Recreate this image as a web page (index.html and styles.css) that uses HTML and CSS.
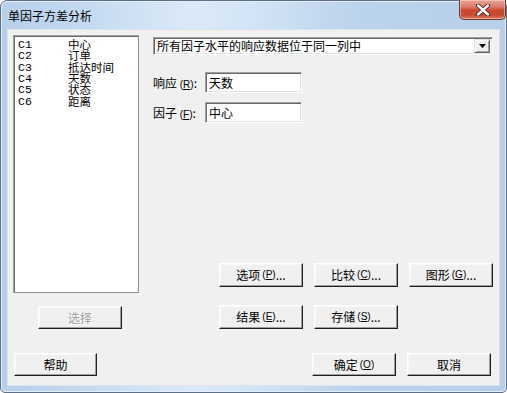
FILE: index.html
```html
<!DOCTYPE html>
<html lang="zh-CN">
<head>
<meta charset="utf-8">
<title>单因子方差分析</title>
<link rel="stylesheet" href="styles.css">
</head>
<body>
<div class="window">
  <div class="titlebar">
    <span class="title">单因子方差分析</span>
    <div class="close">
      <svg width="16" height="12" viewBox="0 0 16 12">
        <path d="M3 1.5 L13 10.5 M13 1.5 L3 10.5" fill="none" stroke="#3b2420" stroke-width="4.2" stroke-linecap="round"/>
        <path d="M3 1.5 L13 10.5 M13 1.5 L3 10.5" fill="none" stroke="#ffffff" stroke-width="2.4" stroke-linecap="round"/>
      </svg>
    </div>
  </div>
  <div class="client">
    <div class="main">
      <div class="left">
        <div class="listbox">
          <div class="item"><span class="code">C1</span><span class="name">中心</span></div>
          <div class="item"><span class="code">C2</span><span class="name">订单</span></div>
          <div class="item"><span class="code">C3</span><span class="name">抵达时间</span></div>
          <div class="item"><span class="code">C4</span><span class="name">天数</span></div>
          <div class="item"><span class="code">C5</span><span class="name">状态</span></div>
          <div class="item"><span class="code">C6</span><span class="name">距离</span></div>
        </div>
        <div class="btn disabled select-btn">选择</div>
      </div>
      <div class="right">
        <div class="combo">
          <span class="combo-text">所有因子水平的响应数据位于同一列中</span>
          <span class="combo-arrow">
            <svg width="7" height="4" viewBox="0 0 7 4"><path d="M0 0 H7 L3.5 4 Z" fill="#000"/></svg>
          </span>
        </div>
        <div class="field first">
          <span class="label">响应 <span class="mn">(<u>R</u>)</span>:</span>
          <span class="textbox">天数</span>
        </div>
        <div class="field">
          <span class="label">因子 <span class="mn">(<u>F</u>)</span>:</span>
          <span class="textbox">中心</span>
        </div>
        <div class="btn-grid">
          <div class="btn">选项<span class="mn">(<u>P</u>)</span>...</div>
          <div class="btn">比较<span class="mn">(<u>C</u>)</span>...</div>
          <div class="btn">图形<span class="mn">(<u>G</u>)</span>...</div>
          <div class="btn">结果<span class="mn">(<u>E</u>)</span>...</div>
          <div class="btn">存储<span class="mn">(<u>S</u>)</span>...</div>
        </div>
      </div>
    </div>
    <div class="bottom">
      <div class="btn help">帮助</div>
      <div class="btn ok">确定<span class="mn">(<u>O</u>)</span></div>
      <div class="btn">取消</div>
    </div>
  </div>
</div>
</body>
</html>
```
FILE: styles.css
```css
* { box-sizing: border-box; }
html, body { margin: 0; padding: 0; background: #ffffff; }
body {
  width: 507px;
  height: 393px;
  overflow: hidden;
  font-family: "Noto Sans CJK SC", "Liberation Sans", sans-serif;
  font-size: 12px;
  color: #000;
}
.window {
  width: 507px;
  height: 393px;
  border: 1px solid #5d6f86;
  border-radius: 7px 7px 5px 5px;
  background:
    linear-gradient(90deg, #b6cfe9 0%, #c8dcf2 20%, #dbeaf8 38%, #d2e4f6 50%, #bcd3ec 70%, #b8cfe9 100%);
  box-shadow: inset 0 0 0 1px #e4eefa;
  padding: 0 6px 6px 6px;
  display: flex;
  flex-direction: column;
}
.titlebar {
  height: 28px;
  display: flex;
  align-items: flex-start;
  position: relative;
}
.title {
  margin: 7px 0 0 1px;
  line-height: 16px;
  color: #000;
}
.close {
  position: absolute;
  right: -6px;
  top: -1px;
  width: 47px;
  height: 20px;
  border: 1px solid #6b3a32;
  border-top: none;
  border-radius: 0 0 5px 5px;
  background: linear-gradient(180deg, #e8a597 0%, #db7d6a 35%, #c9472f 55%, #c84a32 80%, #dc7b63 100%);
  box-shadow: inset 0 0 0 1px rgba(255,220,210,0.5);
  display: flex;
  align-items: center;
  justify-content: center;
}
.client {
  flex: 1;
  background: #f0f0f0;
  border: 1px solid #dbe3ec;
  display: flex;
  flex-direction: column;
}
.main {
  display: flex;
  padding: 5px 0 0 5px;
}
.left {
  width: 126px;
  display: flex;
  flex-direction: column;
}
.listbox {
  height: 258px;
  background: #fff;
  border: 1px solid;
  border-color: #a0a0a0 #8e8e8e #8e8e8e #a0a0a0;
  box-shadow: inset 1px 1px 0 #696969;
  padding: 3px 0 0 4px;
}
.item {
  display: flex;
  align-items: center;
  height: 11.3px;
  line-height: 11px;
  white-space: nowrap;
}
.code {
  width: 50px;
  font-family: "Liberation Mono", monospace;
  font-size: 11.5px;
}
.name { font-size: 11.5px; }
.btn {
  height: 23px;
  width: 84px;
  background: #f0f0f0;
  border: 1px solid;
  border-color: #ffffff #1e1e1e #1e1e1e #ffffff;
  box-shadow: inset -1px -1px 0 #a0a0a0, inset 1px 1px 0 #f8f8f8;
  display: flex;
  align-items: center;
  justify-content: center;
  white-space: nowrap;
  line-height: 14px;
}
.btn.disabled {
  color: #a0a0a0;
  text-shadow: 1px 1px 0 #ffffff;
}
.select-btn { margin: 13px 0 0 25px; }
.mn {
  font-family: "Liberation Sans", sans-serif;
  font-size: 10px;
  margin-left: 2px;
}
.mn u { text-underline-offset: 1px; }
.right {
  margin-left: 14px;
  width: 340px;
  padding-top: 2px;
  display: flex;
  flex-direction: column;
}
.combo {
  height: 18px;
  background: #fff;
  border: 1px solid;
  border-color: #a0a0a0 #ffffff #ffffff #a0a0a0;
  box-shadow: inset 1px 1px 0 #696969, inset -1px -1px 0 #e3e3e3;
  display: flex;
  align-items: center;
  padding: 0 2px 0 3px;
}
.combo-text { flex: 1; line-height: 14px; }
.combo-arrow {
  width: 16px;
  height: 14px;
  background: #f0f0f0;
  border: 1px solid;
  border-color: #e3e3e3 #696969 #696969 #e3e3e3;
  box-shadow: inset 1px 1px 0 #fff, inset -1px -1px 0 #a0a0a0;
  display: flex;
  align-items: center;
  justify-content: center;
}
.field {
  display: flex;
  align-items: center;
  margin-top: 9px;
  height: 21px;
}
.field.first { margin-top: 17px; }
.label {
  width: 52px;
  white-space: nowrap;
}
.label .mn { margin-left: 0; }
.textbox {
  width: 97px;
  height: 21px;
  background: #fff;
  border: 1px solid;
  border-color: #a0a0a0 #ffffff #ffffff #a0a0a0;
  box-shadow: inset 1px 1px 0 #696969, inset -1px -1px 0 #e3e3e3;
  padding: 0 0 0 3px;
  line-height: 19px;
}
.btn-grid {
  margin-top: 140px;
  display: grid;
  grid-template-columns: repeat(3, 84px);
  grid-auto-rows: 24px;
  column-gap: 11px;
  row-gap: 18px;
  justify-content: end;
}
.btn-grid .btn { height: 24px; }
.bottom {
  display: flex;
  margin-top: 24px;
  padding: 0 8px 0 6px;
  gap: 11px;
}
.bottom .help { width: 83px; }
.bottom .ok { margin-left: auto; }
```
